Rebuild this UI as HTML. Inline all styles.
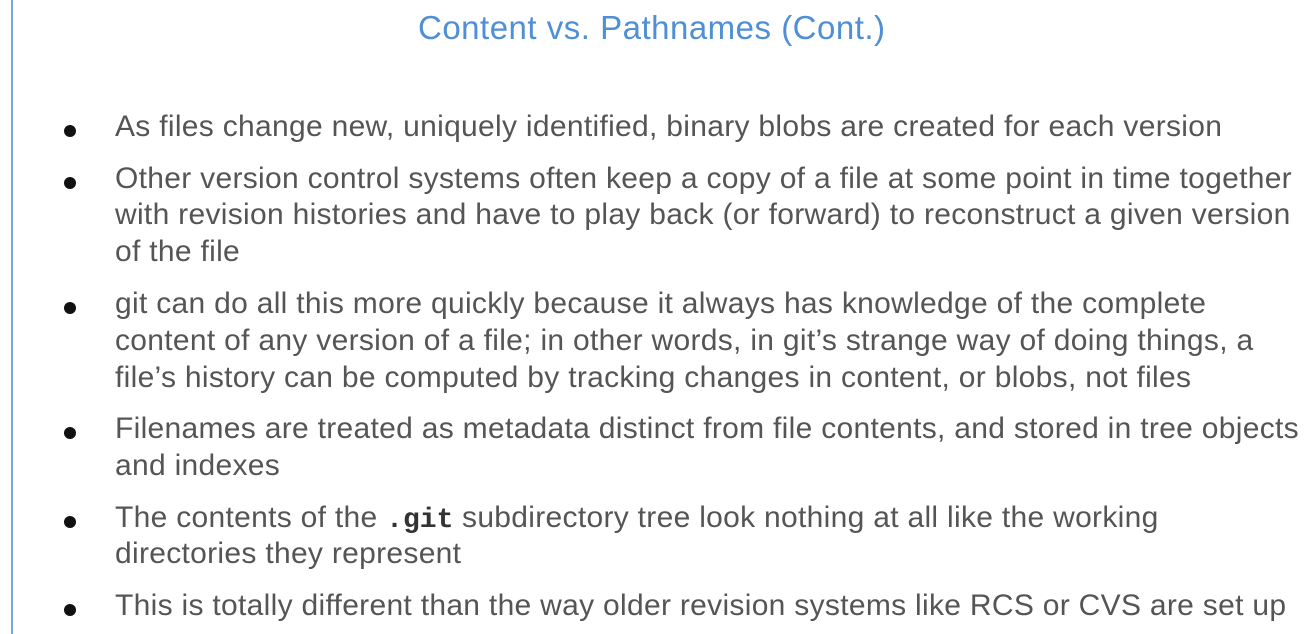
<!DOCTYPE html>
<html><head><meta charset="utf-8"><style>
html,body{margin:0;padding:0;background:#fff;width:1316px;height:634px;overflow:hidden;position:relative;font-family:"Liberation Sans",sans-serif}
.bar{position:absolute;left:11px;top:0;width:2px;height:634px;background:#7aa6dc}
.t{position:absolute;left:418px;top:9px;font-size:33px;color:#4f8fd6;white-space:nowrap;letter-spacing:0.5px}
.l{position:absolute;left:115px;font-size:30px;color:#555;white-space:nowrap;line-height:36px;height:36px;letter-spacing:0.3px}
.b{position:absolute;left:64px;width:12px;height:12px;border-radius:50%;background:#111}
code{font-family:"Liberation Mono",monospace;font-weight:bold;color:#333;font-size:28px;letter-spacing:0}
</style></head><body>
<div class="bar"></div>
<div class="t">Content vs. Pathnames (Cont.)</div>
<div class="b" style="top:125px"></div>
<div class="l" style="top:109px">As files change new, uniquely identified, binary blobs are created for each version</div>
<div class="b" style="top:177px"></div>
<div class="l" style="top:161px">Other version control systems often keep a copy of a file at some point in time together</div>
<div class="l" style="top:197px">with revision histories and have to play back (or forward) to reconstruct a given version</div>
<div class="l" style="top:234px">of the file</div>
<div class="b" style="top:302px"></div>
<div class="l" style="top:286px">git can do all this more quickly because it always has knowledge of the complete</div>
<div class="l" style="top:323px">content of any version of a file; in other words, in git’s strange way of doing things, a</div>
<div class="l" style="top:360px">file’s history can be computed by tracking changes in content, or blobs, not files</div>
<div class="b" style="top:427px"></div>
<div class="l" style="top:411px">Filenames are treated as metadata distinct from file contents, and stored in tree objects</div>
<div class="l" style="top:448px">and indexes</div>
<div class="b" style="top:516px"></div>
<div class="l" style="top:500px">The contents of the <code>.git</code> subdirectory tree look nothing at all like the working</div>
<div class="l" style="top:536px">directories they represent</div>
<div class="b" style="top:604px"></div>
<div class="l" style="top:588px">This is totally different than the way older revision systems like RCS or CVS are set up</div>
</body></html>
